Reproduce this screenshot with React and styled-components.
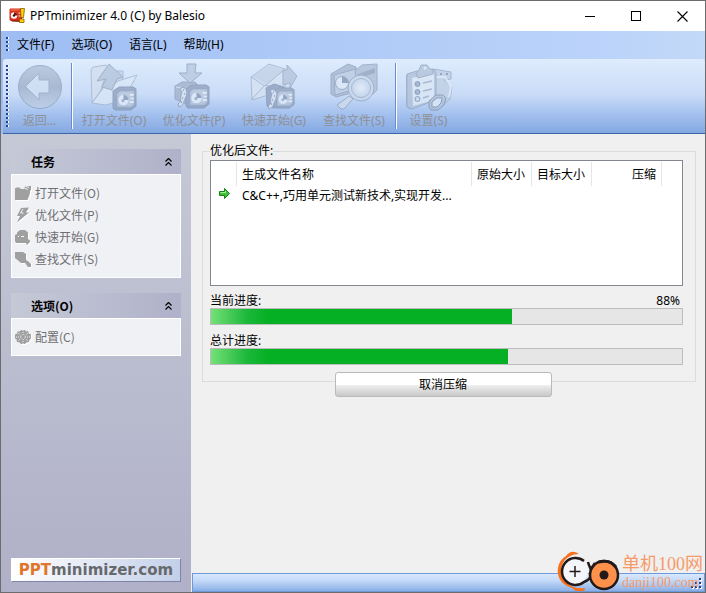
import React from "react";
import styled, { createGlobalStyle } from "styled-components";

const toolbarItems = [
  { id: "open", label: "打开文件(O)" },
  { id: "optimize", label: "优化文件(P)" },
  { id: "quick", label: "快速开始(G)" },
  { id: "search", label: "查找文件(S)" },
];

const taskItems = [
  { id: "open", label: "打开文件(O)" },
  { id: "optimize", label: "优化文件(P)" },
  { id: "quick", label: "快速开始(G)" },
  { id: "search", label: "查找文件(S)" },
];

const optionItems = [{ id: "config", label: "配置(C)" }];

const menus = ["文件(F)", "选项(O)", "语言(L)", "帮助(H)"];

export default function App() {
  return (
    <>
      <GlobalStyle />
      <Window>
        <TitleBar>
          <AppIcon />
          <Title>PPTminimizer 4.0 (C) by Balesio</Title>
          <CaptionButton aria-label="Minimize">
            <svg width="11" height="11" shapeRendering="crispEdges">
              <path d="M0 5.5h10" stroke="#000" />
            </svg>
          </CaptionButton>
          <CaptionButton aria-label="Maximize">
            <svg width="11" height="11" shapeRendering="crispEdges">
              <path d="M.5.5h9v9h-9z" fill="none" stroke="#000" />
            </svg>
          </CaptionButton>
          <CaptionButton aria-label="Close">
            <svg width="11" height="11">
              <path d="M.5.5l10 10M10.5.5l-10 10" stroke="#000" strokeWidth="1.1" />
            </svg>
          </CaptionButton>
        </TitleBar>

        <Rebar>
          <MenuBar>
            <Grip />
            <MenuList>
              {menus.map((menu) => (
                <MenuButton key={menu}>{menu}</MenuButton>
              ))}
            </MenuList>
          </MenuBar>
          <Toolbar>
            <Grip />
            <ToolButton $narrow disabled>
              <ToolIcon name="back" />
              返回...
            </ToolButton>
            <Separator />
            {toolbarItems.map((item) => (
              <ToolButton key={item.id} disabled>
                <ToolIcon name={item.id} />
                {item.label}
              </ToolButton>
            ))}
            <Separator />
            <ToolButton $narrow disabled>
              <ToolIcon name="settings" />
              设置(S)
            </ToolButton>
          </Toolbar>
        </Rebar>

        <Body>
          <Sidebar>
            <TaskPanel title="任务" items={taskItems} />
            <TaskPanel title="选项(O)" items={optionItems} />
            <Brand href="#">
              <b>PPT</b>minimizer.com
            </Brand>
          </Sidebar>
          <Content>
            <Main>
              <Group>
                <Legend>优化后文件:</Legend>
                <ListBox>
                  <FileTable>
                    <colgroup>
                      <Col $width={26} />
                      <Col />
                      <Col $width={60} />
                      <Col $width={60} />
                      <Col $width={70} />
                      <Col $width={20} />
                    </colgroup>
                    <thead>
                      <tr>
                        <Th />
                        <Th>生成文件名称</Th>
                        <Th>原始大小</Th>
                        <Th>目标大小</Th>
                        <Th $right>压缩</Th>
                        <Th $last />
                      </tr>
                    </thead>
                    <tbody>
                      <tr>
                        <Td>
                          <RowArrow />
                        </Td>
                        <Td>C&amp;C++,巧用单元测试新技术,实现开发...</Td>
                        <Td />
                        <Td />
                        <Td />
                        <Td />
                      </tr>
                    </tbody>
                  </FileTable>
                </ListBox>
                <Fields>
                  <ProgressField id="current" label="当前进度:" fill={64} text="88%" />
                  <ProgressField id="total" label="总计进度:" fill={63} />
                </Fields>
              </Group>
              <CancelButton>取消压缩</CancelButton>
            </Main>
            <StatusBar>
              <SizeGrip />
            </StatusBar>
          </Content>
        </Body>

        <Watermark>
          <WatermarkLogo />
          <WatermarkText>
            <WatermarkName>单机100网</WatermarkName>
            <WatermarkUrl>danji100.com</WatermarkUrl>
          </WatermarkText>
        </Watermark>
      </Window>
    </>
  );
}

function TaskPanel({ title, items }) {
  return (
    <section>
      <PanelHeader>
        {title}
        <svg width="7" height="8" viewBox="0 0 7 8">
          <path d="M.5 3.500l3-3 3 3M.5 7.500l3-3 3 3" fill="none" stroke="#000" strokeWidth="1.2" />
        </svg>
      </PanelHeader>
      <PanelBody>
        {items.map((item) => (
          <PanelItem key={item.id} disabled>
            <SmallIcon name={item.id} />
            {item.label}
          </PanelItem>
        ))}
      </PanelBody>
    </section>
  );
}

function ProgressField({ id, label, fill, text }) {
  return (
    <div>
      <FieldHead>
        <span id={id}>{label}</span>
        <Percent>{text}</Percent>
      </FieldHead>
      <Track role="progressbar" aria-labelledby={id} aria-valuenow={fill}>
        <Fill style={{ width: `${fill}%` }} />
      </Track>
    </div>
  );
}

function AppIcon() {
  return (
    <svg width="16" height="16" viewBox="0 0 16 16">
      <path d="M1 1h12v13l-10-.5L1 12z" fill="#7d1008" />
      <rect x="0.5" y="0.5" width="11.5" height="12" rx="1" fill="#d9301a" />
      <rect x="1.5" y="1.5" width="9" height="1" fill="#f7825c" />
      <circle cx="5" cy="7.5" r="3.2" fill="#fff" />
      <path d="M5 7.5V4.300a3.200 3.200 0 0 1 3.200 3.200z" fill="#7d1008" />
      <circle cx="5" cy="7.500" r="1.200" fill="#3a0d0a" />
      <path d="M9.500 5h2M9.500 8h2" stroke="#fff" />
      <path d="M11.500 0.500h4l-1 9h-2.500z" fill="#ffd400" stroke="#8a5c00" strokeWidth=".8" />
      <path d="M10.500 11h4.500v3.500h-4.500z" fill="#ffd400" stroke="#8a5c00" strokeWidth=".8" />
    </svg>
  );
}

// small projector slide that sits at the corner of several icons
function Slide({ x, y, size }) {
  return (
    <g transform={`translate(${x} ${y}) scale(${size / 24})`}>
      <path d="M1 5l6-4h13l3 2v16l-5 4H3l-2-2z" fill="#93a5c0" stroke="#8194b2" />
      <path d="M4 7l4-3h14v14l-3 3H4z" fill="#a9b9d0" stroke="#8799b6" />
      <path d="M6 8l3-2h11v11l-2 2H6z" fill="#b9c7dc" />
      <circle cx="11" cy="13.500" r="5" fill="#e3ecf9" />
      <path d="M11 13.500v-5a5 5 0 0 1 5 5z" fill="#8799b6" />
      <circle cx="10.500" cy="14" r="1.500" fill="#98a9c4" />
      <path d="M17 8.500h4M18 12h3M17 15.500h4" stroke="#e8f0fb" strokeWidth="1.500" />
    </g>
  );
}

function Film({ x, y }) {
  return (
    <g transform={`translate(${x} ${y})`}>
      <path d="M3 0c7 2 5 8 3 12s-1 6-6 8l-1-3c4-2 2-6 3-9s2-4-1-5z" fill="#d7e2f1" stroke="#8a9bb8" />
      <path d="M4 3h1M5 7h1M3 11h1M2 15h1" stroke="#8496b4" strokeWidth="1.500" />
    </g>
  );
}

function ToolIcon({ name }) {
  const drawings = {
    back: (
      <>
        <circle cx="24" cy="24" r="21.500" fill="url(#ball)" stroke="#8fa1bb" />
        <path d="M9.500 23.500L23 10v7h10v13H23v7z" fill="#cfdff4" stroke="#97a8c1" />
      </>
    ),
    open: (
      <>
        <path d="M1 7l2-3 13-2 3 4v10L2 40z" fill="#d3dfef" stroke="#a5b5cd" />
        <path d="M17 8L33 8v14L8 36z" fill="#c8d6ea" stroke="#a5b5cd" />
        <path d="M2 40L14 24l8-1 6-5 19-6-14 26-18 4z" fill="#dbe7f7" stroke="#a5b5cd" />
        <path d="M19 1L33 14l-6 2-5 11-10-3 4-8-9 2z" fill="#b5c5db" stroke="#93a5bf" />
        <Slide x={22} y={23} size={25} />
      </>
    ),
    optimize: (
      <>
        <path d="M5 23l7-4h13l4 4-7 7v13l-6-2-11-5z" fill="#a2b3cb" stroke="#8d9fbb" />
        <path d="M6 24l11 2 7-4" fill="none" stroke="#d5e1f1" />
        <path d="M17 1h9l-1 9h7L20 20 9 10h8z" fill="#b9c9df" stroke="#8fa1bc" />
        <Slide x={15} y={21} size={25} />
        <Film x={9} y={24} />
      </>
    ),
    quick: (
      <>
        <path d="M1 14L19 1l16 5v21L2 37z" fill="#d6e2f2" stroke="#a1b1ca" />
        <path d="M2 14L19 2l15 5-18 14z" fill="#c3d2e6" />
        <path d="M1 14l14 9L35 6M1 37l14-15 20 5" fill="none" stroke="#a1b1ca" />
        <path d="M33 7h4V2l10 11-7 12v-5l-7 2z" fill="#b5c5dc" stroke="#96a7c0" />
        <path d="M16 25l8-4 10 3v19l-11 2-6-2z" fill="#8fa1bd" stroke="#8496b4" />
        <Slide x={23} y={24} size={22} />
        <Film x={19} y={26} />
      </>
    ),
    search: (
      <>
        <path d="M1 11L18 1l8 3 3 24-23 6-5-3z" fill="#a8b8cf" stroke="#8fa1bc" />
        <path d="M4 12l22-6v20L5 32z" fill="#bdcce1" stroke="#8fa1bc" />
        <circle cx="12" cy="20" r="6.500" fill="#dfe9f7" stroke="#8fa1bc" />
        <path d="M12 20v-6.500a6.500 6.500 0 0 1 6.500 6.500z" fill="#8799b6" />
        <path d="M25 8l7-6 15-1v26l-4 4-15-3z" fill="#b0bfd6" stroke="#92a4bf" />
        <path d="M28 11l17-6v5l-16 5z" fill="#92a4bf" />
        <path d="M19 33l4 3-9 10H11l-4-4z" fill="#cddaec" stroke="#8fa1bc" />
        <circle cx="31" cy="25" r="13" fill="#c8d7eb" stroke="#93a5bf" />
        <circle cx="31" cy="25" r="9.500" fill="url(#lens)" stroke="#9fb0c9" />
      </>
    ),
    settings: (
      <>
        <path d="M28 6l18 3v7l-7 1 8 7-2 12-9 8-8-3z" fill="#c0cfe4" stroke="#99aac3" />
        <path d="M30 14h10l6 10-2 10" fill="none" stroke="#dde8f6" strokeWidth="2" />
        <path d="M35 11h2M41 11h2" stroke="#8294b1" strokeWidth="2" />
        <path d="M1 12l4-2v37l-4-4z" fill="#98a9c3" />
        <path d="M2 11l10-3 16-2 3 3v28L7 46l-5-2z" fill="#b2c2d9" stroke="#94a6c0" />
        <path d="M7 15l22-5v27L8 43z" fill="#dde8f6" />
        <path d="M11 10l3-3 2-5h6l3 4 3 1v4l-15 4z" fill="#b3c3da" stroke="#94a6c0" />
        <circle cx="20" cy="5" r="1.500" fill="#e3ecf8" />
        <circle cx="12.500" cy="21" r="2.500" fill="#9dafc8" stroke="#8193b0" />
        <circle cx="12.500" cy="29" r="2.500" fill="#9dafc8" stroke="#8193b0" />
        <circle cx="12.500" cy="36" r="2.500" fill="#cfdcee" stroke="#8193b0" />
        <path d="M18 20l9-2M18 28l9-2M18 35l6-2" stroke="#9fb0c9" strokeWidth="1.500" />
        <path d="M24 38l7-6h7l3 3-2 7-6 5h-7l-2-3z" fill="#b0c0d7" stroke="#8193b0" />
        <path d="M27 39l5-4h5l-1 5-4 4h-5z" fill="#dce8f6" stroke="#8193b0" />
      </>
    ),
  };
  return (
    <FadedSvg width="48" height="48" viewBox="0 0 48 48">
      <defs>
        <linearGradient id="ball" x1="0" y1="0" x2="0" y2="1">
          <stop offset="0" stopColor="#b4c4da" />
          <stop offset=".5" stopColor="#9fb0c9" />
          <stop offset="1" stopColor="#c0d0e8" />
        </linearGradient>
        <radialGradient id="lens">
          <stop offset="0" stopColor="#e6effb" />
          <stop offset="1" stopColor="#c3d3e9" />
        </radialGradient>
      </defs>
      {drawings[name]}
    </FadedSvg>
  );
}

function SmallIcon({ name }) {
  const shapes = {
    open: "M0 3.500L1.500 2.500h3L6 4h3.500V2.500L11 1h5v4.500h-1v3L12.500 15H0z",
    optimize: "M6 1l8-.5-3 5h3L2 15.500 5 9H2z",
    quick: "M0 12V6l2-1V3.500L5 1h5l3 2.500V10l2 1.500v1.500L12 16l-1-2H1z",
    search: "M0 1h8l3 2v5l1 2h1l3 3v3h-3l-3-4H6L0 7z",
    config:
      "M6 1h4l1 1.500 2-.5 1 2.500 2 1v4l-1.500 1.500-.5 2-2.500.5L10 15H6l-1.500-1.500L2 13l-.5-2.500L0 9.500v-4l2-1L3 2l2 .5z",
  };
  return (
    <svg width="17" height="17" viewBox="0 0 17 17">
      <path d={shapes[name]} fill="#fff" transform="translate(1 1)" />
      <path d={shapes[name]} fill="#a0a0a0" />
      {name === "open" && <path d="M10 3.500h1.500l1 1.500M11 1.500l3 1" fill="none" stroke="#f0f1f5" />}
      {name === "quick" && <path d="M3 7.500h1M6 7.500h3" stroke="#fff" />}
      {name === "optimize" && <path d="M8 2L5.500 6h3" fill="none" stroke="#f0f1f5" />}
      {name === "config" && (
        <path
          d="M8 1v5M8 10v5M1 8h5M10 8h5M3 4l3.500 3M9.500 9l3.500 3M13 4L9.500 7M6.500 9L3 12"
          stroke="#f0f1f5"
          strokeDasharray="1 1"
        />
      )}
    </svg>
  );
}

function RowArrow() {
  return (
    <ArrowSvg width="11" height="11" viewBox="0 0 11 11">
      <path d="M.5 3.500h5v-3l5 5-5 5v-3h-5z" fill="#3fc23a" stroke="#15801a" />
      <path d="M1.500 4.500h5V3" fill="none" stroke="#a4ee8f" />
    </ArrowSvg>
  );
}

function SizeGrip() {
  return (
    <svg width="11" height="11" shapeRendering="crispEdges">
      <path d="M9 1h2v2H9zM5 5h2v2H5zM9 5h2v2H9zM1 9h2v2H1zM5 9h2v2H5zM9 9h2v2H9z" fill="#fff" />
      <path d="M8 0h2v2H8zM4 4h2v2H4zM8 4h2v2H8zM0 8h2v2H0zM4 8h2v2H4zM8 8h2v2H8z" fill="#27418a" />
    </svg>
  );
}

function WatermarkLogo() {
  return (
    <svg width="65" height="44" viewBox="0 0 65 44">
      <path
        d="M22 6C16 2 12 4 9 8 2 12 0 20 1 26c1 7 7 12 14 14l4 3h8l1-3c-8 1-14-1-18-5C4 30 3 23 5 17 8 10 14 6 22 6z"
        fill="#f7711c"
      />
      <circle cx="18" cy="23" r="13" fill="#f4f6fa" />
      <path d="M27 13A13.500 13.500 0 1 0 27 34C33 32 35 27 34 22 33 19 32 18 31 14" fill="none" stroke="#241a1a" strokeWidth="2.500" />
      <path d="M18 18v11M12.500 23.500h11" stroke="#241a1a" strokeWidth="1.500" />
      <circle cx="47" cy="27" r="14" fill="#ff914a" stroke="#241a1a" strokeWidth="2.500" />
      <path d="M34 21l4-6" fill="none" stroke="#241a1a" strokeWidth="2.500" />
      <path d="M42 14c7-2 13 0 17 5" fill="none" stroke="#241a1a" strokeWidth="3" />
      <circle cx="47" cy="27" r="4.500" fill="#241a1a" />
    </svg>
  );
}

const GlobalStyle = createGlobalStyle`
  * {
    box-sizing: border-box;
  }

  body {
    margin: 0;
    font-family: "Noto Sans", "Noto Sans CJK SC", sans-serif;
    font-size: 12px;
    line-height: 16px;
    color: #000;
  }

  button {
    margin: 0;
    padding: 0;
    border: none;
    background: none;
    font: inherit;
    color: inherit;
  }

  svg {
    display: block;
    flex: none;
  }
`;

const Window = styled.div`
  position: relative;
  display: flex;
  flex-direction: column;
  min-height: 100vh;
  border: 1px solid #6d6b6e;
  background: #f0f0f0;
`;

const TitleBar = styled.header`
  display: flex;
  align-items: center;
  height: 30px;
  padding-left: 8px;
  background: #fff;
`;

const Title = styled.h1`
  flex: 1;
  margin: 0;
  padding-left: 5px;
  font-size: 12px;
  font-weight: 400;
`;

const CaptionButton = styled.button`
  display: flex;
  align-items: center;
  justify-content: center;
  width: 46px;
  height: 29px;
`;

const Rebar = styled.div`
  background: linear-gradient(90deg, #9dbdf3, #a9c6f6 30%, #bbd3fa 85%, #c2d9f8);
`;

const MenuBar = styled.nav`
  display: flex;
  align-items: center;
  height: 28px;
  padding-left: 5px;
`;

const MenuList = styled.div`
  display: flex;
  gap: 17px;
  padding-left: 8px;
`;

const Grip = styled.div`
  align-self: stretch;
  width: 3px;
  margin: 6px 0;
  background:
    linear-gradient(90deg, #27418a 2px, transparent 2px) 0 0 / 3px 2px,
    #fff;
  mask: linear-gradient(#000 2px, transparent 2px) 0 0 / 3px 4px;
`;

const MenuButton = styled.button`
  white-space: nowrap;
`;

const Toolbar = styled.div`
  display: flex;
  align-items: center;
  height: 75px;
  margin-left: 2px;
  padding-left: 3px;
  border-bottom: 1px solid #3d66a8;
  border-radius: 3px 3px 0 0;
  background: linear-gradient(#deecfd, #c9dcf7 48%, #a3c0ee 75%, #83a8e1);
`;

const ToolButton = styled.button`
  display: flex;
  flex-direction: column;
  align-items: center;
  gap: 2px;
  width: ${({ $narrow }) => ($narrow ? "61px" : "80px")};
  color: #8e9096;
`;

const FadedSvg = styled.svg`
  opacity: 0.8;
`;

const Separator = styled.div`
  width: 2px;
  height: 66px;
  border-left: 1px solid #6a8ccb;
  border-right: 1px solid #fff;
  margin: 0 1px;
`;

const Body = styled.div`
  display: flex;
  flex: 1;
`;

const Sidebar = styled.aside`
  display: flex;
  flex-direction: column;
  gap: 15px;
  width: 190px;
  padding: 15px 10px 10px;
  background: linear-gradient(#c5c9d6, #b0b0c8);
`;

const PanelHeader = styled.h2`
  display: flex;
  align-items: center;
  justify-content: space-between;
  height: 25px;
  margin: 0;
  padding: 0 9px 0 20px;
  background: linear-gradient(90deg, #c5c9d6, #b0b1ca);
  font-family: "Noto Sans CJK SC", sans-serif;
  font-size: 12px;
`;

const PanelBody = styled.div`
  padding: 7px 3px;
  border: 1px solid #fff;
  background: #f0f1f5;
`;

const PanelItem = styled.button`
  display: flex;
  align-items: center;
  gap: 3px;
  height: 22px;
  color: #6f6f72;
  font-family: "Noto Sans CJK SC", sans-serif;
`;

const Brand = styled.a`
  margin-top: auto;
  border: 1px solid;
  border-color: #fff #7e86a8 #7e86a8 #fff;
  background: linear-gradient(90deg, #fff, #c3cfe9);
  color: #66696c;
  font-family: "DejaVu Sans", sans-serif;
  font-size: 15px;
  font-weight: 700;
  line-height: 22px;
  text-align: center;
  text-decoration: none;

  b {
    color: #e0752c;
  }
`;

const Content = styled.div`
  display: flex;
  flex-direction: column;
  flex: 1;
  min-width: 0;
`;

const Main = styled.main`
  display: flex;
  flex-direction: column;
  flex: 1;
  padding: 9px 9px 9px 11px;
`;

const Group = styled.fieldset`
  min-width: 0;
  margin: 0;
  padding: 1px 12px 16px 7px;
  border: 1px solid #dcdcdc;
`;

const Legend = styled.legend`
  padding: 0;
`;

const ListBox = styled.div`
  height: 126px;
  padding-top: 1px;
  border: 1px solid #828790;
  background: #fff;
`;

const FileTable = styled.table`
  width: 100%;
  border-collapse: separate;
  border-spacing: 0;
  table-layout: fixed;
`;

const Col = styled.col`
  width: ${({ $width }) => ($width ? `${$width}px` : "auto")};
`;

const Th = styled.th`
  height: 24px;
  padding: 2px 5px 0;
  border-right: ${({ $last }) => ($last ? "none" : "1px solid #e5e5e5")};
  font-weight: 400;
  text-align: ${({ $right }) => ($right ? "right" : "left")};
  white-space: nowrap;
`;

const Td = styled.td`
  height: 18px;
  padding: 2px 5px 0;
  vertical-align: top;
  white-space: nowrap;
`;

const ArrowSvg = styled.svg`
  margin-left: 3px;
`;

const Fields = styled.div`
  display: grid;
  gap: 9px;
  padding-top: 8px;
`;

const FieldHead = styled.div`
  display: flex;
  justify-content: space-between;
  line-height: 14px;
`;

const Percent = styled.span`
  padding-right: 3px;
`;

const Track = styled.div`
  height: 17px;
  border: 1px solid #bcbcbc;
  background: #e6e6e6;
`;

const Fill = styled.div`
  height: 100%;
  background: linear-gradient(90deg, #74e278, #58d264 12px, #1cb83a 36px, #06b025 56px);
`;

const CancelButton = styled.button`
  align-self: center;
  width: 217px;
  height: 25px;
  margin: -10px 12px 0 0;
  padding-top: 1px;
  border: 1px solid #bababa;
  border-radius: 3px;
  background: linear-gradient(#fff 50%, #ececec 55%, #c9c9c9);
`;

const StatusBar = styled.footer`
  display: flex;
  align-items: flex-end;
  justify-content: flex-end;
  height: 19px;
  margin-left: 1px;
  padding: 2px;
  border: 1px solid #6f9ad8;
  background: linear-gradient(#d8e8fd, #c3d9f8 40%, #8aafe6);
`;

const Watermark = styled.div`
  position: absolute;
  right: 2px;
  bottom: 0;
  display: flex;
  align-items: flex-end;
  color: #f79a68;
`;

const WatermarkText = styled.div`
  display: flex;
  flex-direction: column;
`;

const WatermarkName = styled.span`
  font-family: "Liberation Serif", "Noto Sans CJK SC", serif;
  font-size: 18px;
  line-height: 20px;
`;

const WatermarkUrl = styled.span`
  font-family: "Liberation Serif", serif;
  font-size: 14px;
  line-height: 18px;
`;
